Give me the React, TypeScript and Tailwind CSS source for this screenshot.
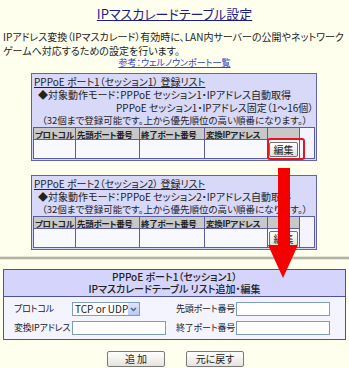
import React from "react";

const font = "font-['Noto_Sans_CJK_JP','Noto_Sans',sans-serif] [font-feature-settings:'palt']";

function ListBox({ port, lines }: { port: number; lines: React.ReactNode }) {
  return (
    <div className="ml-[31px] w-[286px] border border-[#6464a4] bg-[#d8d8f8] p-[1px]">
      <div className="px-[1px] text-[10px] leading-[13px] text-[#222] whitespace-nowrap">
        <div>
          <span className="underline">
            PPPoE ポート{port}（セッション{port}） 登録リスト
          </span>
        </div>
        {lines}
      </div>
      <table className="w-[282px] table-fixed border-collapse border border-[#5c5ca0] text-[8.5px] leading-[10px] font-bold tracking-[-0.3px] text-[#222]">
        <colgroup>
          <col className="w-[42px]" />
          <col className="w-[64px]" />
          <col className="w-[65px]" />
          <col className="w-[63px]" />
          <col className="w-[32px]" />
          <col />
        </colgroup>
        <tbody>
          <tr className="h-[12px]">
            <td className="overflow-hidden border border-[#5c5ca0] bg-[#c8c8c8] px-[1px] whitespace-nowrap">プロトコル</td>
            <td className="overflow-hidden border border-[#5c5ca0] bg-[#c8c8c8] px-[1px] whitespace-nowrap">先頭ポート番号</td>
            <td className="overflow-hidden border border-[#5c5ca0] bg-[#c8c8c8] px-[1px] whitespace-nowrap">終了ポート番号</td>
            <td className="overflow-hidden border border-[#5c5ca0] bg-[#c8c8c8] px-[1px] whitespace-nowrap">変換IPアドレス</td>
            <td className="border border-[#5c5ca0] bg-[#c8c8c8]"></td>
            <td rowSpan={2} className="border border-[#5c5ca0] bg-[#f4f4ff]"></td>
          </tr>
          <tr className="h-[19px]">
            <td className="border border-[#5c5ca0] bg-[#f8f8ff]"></td>
            <td className="border border-[#5c5ca0] bg-[#f8f8ff]"></td>
            <td className="border border-[#5c5ca0] bg-[#f8f8ff]"></td>
            <td className="border border-[#5c5ca0] bg-[#f8f8ff]"></td>
            <td className="border border-[#5c5ca0] bg-[#f8f8ff] p-0 align-bottom">
              <div className="relative flex justify-end pr-[1px] pb-[1px]">
                <button className="h-[15px] w-[29px] rounded-[2px] border border-[#707070] bg-gradient-to-b from-white to-[#e4e2d8] text-[10px] leading-[13px] font-normal tracking-normal text-[#222]">
                  編集
                </button>
                {port === 1 && (
                  <div className="absolute -left-[1px] -top-[4px] h-[22px] w-[38px] rounded-[3px] border-2 border-[#e8141c]" />
                )}
              </div>
            </td>
          </tr>
        </tbody>
      </table>
    </div>
  );
}

export default function App() {
  return (
    <div className={`relative h-[368px] w-[349px] overflow-hidden bg-[#ffffee] ${font}`}>
      <div className="h-[256px] overflow-hidden">
        <div className="pt-[5px] text-center text-[13px] leading-[17px]">
          <span className="text-[#1c1c8c] underline">IPマスカレードテーブル設定</span>
        </div>
        <p className="mt-[8px] px-[3px] text-[10px] leading-[14px] text-[#222] whitespace-nowrap">
          IPアドレス変換（IPマスカレード）有効時に、LAN内サーバーの公開やネットワーク
          <br />
          ゲームへ対応するための設定を行います。
        </p>
        <div className="text-center text-[9px] leading-[10px]">
          <span className="text-[#3344cc] underline">参考：ウェルノウンポート一覧</span>
        </div>
        <div className="mt-[5px]">
          <ListBox
            port={1}
            lines={
              <>
                <div className="pl-[4px]">◆対象動作モード：PPPoE セッション1・IPアドレス自動取得</div>
                <div className="pl-[82px]">PPPoE セッション1・IPアドレス固定（1～16個）</div>
                <div className="pl-[8px] text-[9.5px]">（32個まで登録可能です。上から優先順位の高い順番になります。）</div>
              </>
            }
          />
        </div>
        <div className="mt-[14px]">
          <ListBox
            port={2}
            lines={
              <>
                <div className="pl-[4px]">◆対象動作モード：PPPoE セッション2・IPアドレス自動取得</div>
                <div className="pl-[8px] text-[9.5px]">（32個まで登録可能です。上から優先順位の高い順番になります。）</div>
              </>
            }
          />
        </div>
      </div>

      <div className="h-[1px] bg-[#e4e4d4]" />
      <div className="h-[2px] bg-[#b4b4a4]" />
      <div className="h-[1px] bg-[#e8e8d8]" />

      <div className="mx-[3px] mt-[9px] border border-[#5050a0]">
        <div className="border-b border-[#5050a0] bg-[#d4d4fc] py-[1px] text-center text-[10px] leading-[12px] font-medium text-[#222] whitespace-nowrap">
          <div>PPPoE ポート1（セッション1）</div>
          <div>IPマスカレードテーブル リスト追加・編集</div>
        </div>
        <div className="grid grid-cols-[58px_104px_60px_96px] gap-y-[5px] bg-[#f4f4ff] pt-[5px] pb-[4px] pl-[10px] text-[9px] leading-[14px] tracking-[-0.2px] text-[#222] whitespace-nowrap">
          <div className="self-center">プロトコル</div>
          <div className="flex h-[14px] w-[68px] items-center border border-[#7f9db9] bg-white tracking-normal">
            <span className="flex-1 pl-[2px] text-[10px] leading-[12px]">TCP or UDP</span>
            <span className="flex h-[12px] w-[13px] items-center justify-center bg-gradient-to-b from-[#dde6fb] to-[#b6c8f4]">
              <svg width="7" height="5" viewBox="0 0 7 5">
                <path d="M1 1 L3.5 3.5 L6 1" fill="none" stroke="#4d6185" strokeWidth="1.4" />
              </svg>
            </span>
          </div>
          <div className="self-center">先頭ポート番号</div>
          <div className="h-[14px] w-[94px] border border-[#7f9db9] bg-white" />
          <div className="self-center">変換IPアドレス</div>
          <div className="h-[14px] w-[94px] border border-[#7f9db9] bg-white" />
          <div className="self-center">終了ポート番号</div>
          <div className="h-[14px] w-[94px] border border-[#7f9db9] bg-white" />
        </div>
      </div>

      <div className="mt-[11px] flex justify-center gap-[21px] pl-[2px]">
        <button className="h-[16px] w-[58px] rounded-[2px] border border-[#7a7a7a] bg-gradient-to-b from-white to-[#e6e4da] text-[10px] leading-[14px] text-[#222]">
          追 加
        </button>
        <button className="h-[16px] w-[58px] rounded-[2px] border border-[#7a7a7a] bg-gradient-to-b from-white to-[#e6e4da] text-[10px] leading-[14px] text-[#222]">
          元に戻す
        </button>
      </div>

      <svg className="absolute left-[268px] top-[168px]" width="31" height="111" viewBox="0 0 31 111">
        <polygon points="10,0 22,0 22,77 30,77 15,110 0,77 10,77" fill="#f40000" />
      </svg>
    </div>
  );
}
